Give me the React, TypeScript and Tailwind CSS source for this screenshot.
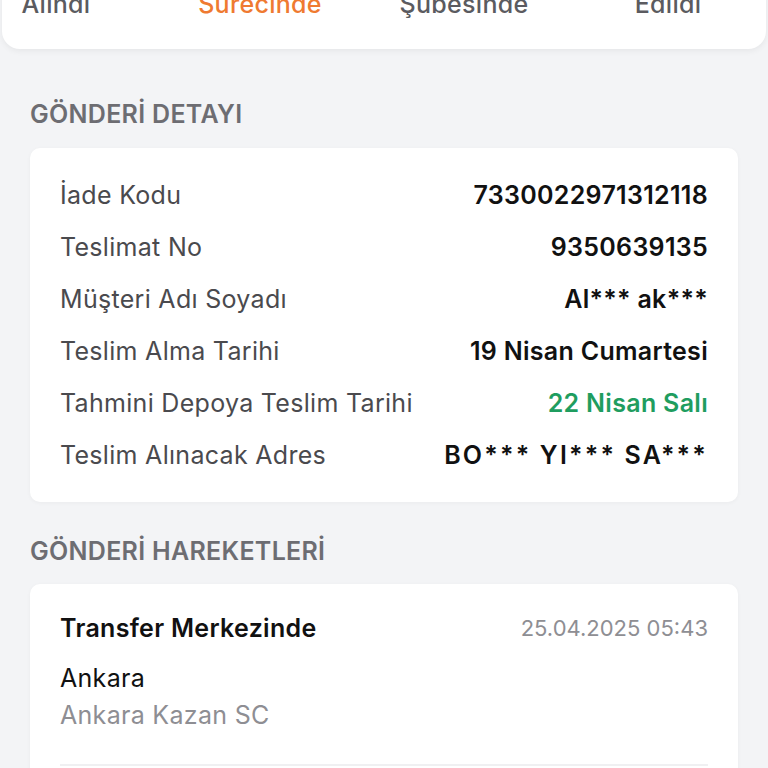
import React from "react";

const rows: { label: string; value: string; green?: boolean; wide?: boolean }[] = [
  { label: "İade Kodu", value: "7330022971312118" },
  { label: "Teslimat No", value: "9350639135" },
  { label: "Müşteri Adı Soyadı", value: "Al*** ak***" },
  { label: "Teslim Alma Tarihi", value: "19 Nisan Cumartesi" },
  { label: "Tahmini Depoya Teslim Tarihi", value: "22 Nisan Salı", green: true },
  { label: "Teslim Alınacak Adres", value: "BO*** YI*** SA***", wide: true },
];

const steps: { label: string; active?: boolean }[] = [
  { label: "Alındı" },
  { label: "Sürecinde", active: true },
  { label: "Şubesinde" },
  { label: "Edildi" },
];

export default function App() {
  return (
    <div
      className="min-h-screen w-full overflow-hidden bg-[#f3f4f6] tracking-[0.3px]"
      style={{ fontFamily: "Inter, 'Noto Sans', sans-serif" }}
    >
      <div className="mx-[2px] -mt-[11px] rounded-b-[18px] bg-white pb-[30px] shadow-[0_2px_6px_rgba(0,0,0,0.06)]">
        <div className="-ml-[48px] grid grid-cols-[204px_204px_204px_204px]">
          {steps.map((s) => (
            <div
              key={s.label}
              className={`text-center text-[25px] leading-[30px] font-medium ${
                s.active ? "text-[#ef7a31]" : "text-[#5b5b60]"
              }`}
            >
              {s.label}
            </div>
          ))}
        </div>
      </div>

      <div className="px-[30px]">
        <div className="mt-[50px] mb-[19px] text-[25px] leading-[30px] font-semibold text-[#6d6d72]">
          GÖNDERİ DETAYI
        </div>
        <div className="rounded-[10px] bg-white px-[30px] py-[21px] shadow-[0_1px_4px_rgba(0,0,0,0.04)]">
          {rows.map((r) => (
            <div
              key={r.label}
              className="flex h-[52px] items-center justify-between text-[25px] leading-[52px]"
            >
              <span className="text-[#4a4a4e]">{r.label}</span>
              <span
                className={`font-semibold ${
                  r.green ? "text-[#1f9d5f]" : "text-[#111111]"
                } ${r.wide ? "tracking-[2.2px]" : ""}`}
              >
                {r.value}
              </span>
            </div>
          ))}
        </div>

        <div className="mt-[34px] mb-[18px] text-[25px] leading-[30px] font-semibold text-[#6d6d72]">
          GÖNDERİ HAREKETLERİ
        </div>
        <div className="rounded-[10px] bg-white px-[30px] pt-[29px] pb-[20px] shadow-[0_1px_4px_rgba(0,0,0,0.04)]">
          <div className="flex items-center justify-between leading-[30px]">
            <span className="text-[25px] font-semibold text-[#111111]">Transfer Merkezinde</span>
            <span className="text-[22px] tracking-normal text-[#8e8e93]">25.04.2025 05:43</span>
          </div>
          <div className="mt-[20px] text-[25px] leading-[30px] text-[#111111]">Ankara</div>
          <div className="mt-[7px] text-[25px] leading-[30px] text-[#8e8e93]">
            Ankara Kazan SC
          </div>
          <div className="mt-[34px] h-[2px] bg-[#f0f0f2]" />
          <div className="h-[60px]" />
        </div>
      </div>
    </div>
  );
}
